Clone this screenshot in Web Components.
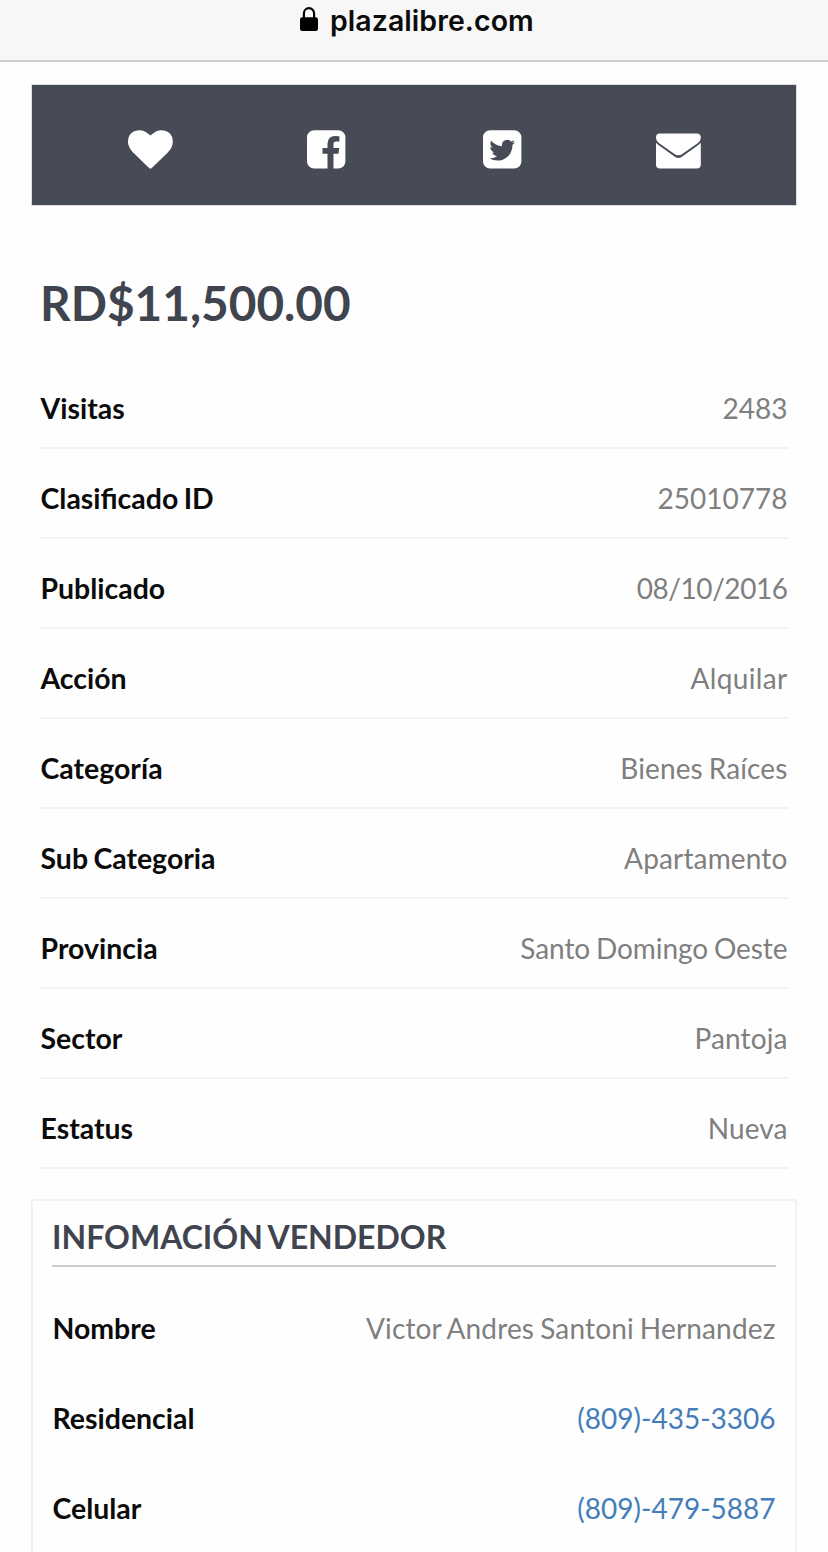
<!DOCTYPE html>
<html lang="es">
<head>
<meta charset="utf-8">
<title>plazalibre.com</title>
<style>
html,body{margin:0;background:#fefefe}
body{height:1552px;overflow:hidden;font-family:Lato,sans-serif}
</style>
</head>
<body>
<listing-page></listing-page>
<script>
const define = (name, html) => {
  const t = document.createElement('template');
  t.innerHTML = html;
  customElements.define(name, class extends HTMLElement {
    constructor() {
      super();
      this.attachShadow({mode: 'open'}).append(t.content.cloneNode(true));
    }
  });
};

define('address-bar', `
<style>
:host{display:flex;box-sizing:border-box;height:62px;background:#f7f7f7;border-bottom:2px solid #cfcfcf;justify-content:center;align-items:flex-start;padding:2px 0 0 5px}
svg{width:18px;height:24px;margin:5px 12px 0 0}
span{font:600 28.500px/37px Inter,sans-serif;letter-spacing:.05px;color:#0b0b0b;width:203px;white-space:nowrap}
</style>
<svg viewBox="0 0 18 24"><rect y="10.300" width="18" height="13.700" rx="2.200" fill="#000"/><path d="M3.900 11.500V6.400a5.100 5.300 0 0 1 10.200 0v5.100" fill="none" stroke="#000" stroke-width="2.200"/></svg>
<span><slot></slot></span>`);

define('share-bar', `
<style>
:host{display:grid;box-sizing:border-box;grid-template-columns:repeat(4,1fr);height:120px;margin:23px 32px 0;padding:4px 30px 0;background:#474b56;outline:1px solid #dcdde3;align-items:center;justify-items:center}
svg{display:block;height:44.800px;fill:#fff;margin-top:4px;overflow:visible}
.wide{width:44.800px}.sq{width:38.400px}
</style>
<svg class="wide" viewBox="0 0 1792 1792"><path d="M896 1664q-26 0-44-18l-624-602q-10-8-27.500-26T145 952.500 77 855 23.500 734 0 596q0-220 127-344t351-124q62 0 126.500 21.500t120 58T820 276t76 68q36-36 76-68t95.500-68.500 120-58T1314 128q224 0 351 124t127 344q0 221-229 450l-623 600q-18 18-44 18z"/></svg>
<svg class="sq" viewBox="0 0 1536 1792"><path d="M1248 128q119 0 203.500 84.500t84.500 203.500v960q0 119-84.500 203.500t-203.500 84.500h-188v-595h199l30-232h-229v-148q0-56 23.500-84t91.500-28l122-1v-207q-63-9-178-9-136 0-217.500 80t-81.500 226v171h-200v232h200v595h-532q-119 0-203.500-84.500t-84.500-203.500v-960q0-119 84.500-203.500t203.500-84.500h960z"/></svg>
<svg class="sq" viewBox="0 0 1536 1792"><path d="M1280 610q-56 25-121 34 68-40 93-117-65 38-134 51-61-66-153-66-87 0-148.500 61.500t-61.500 148.500q0 29 5 48-129-7-242-65t-192-155q-29 50-29 106 0 114 91 175-47-1-100-26v2q0 75 50 133.500t123 72.500q-29 8-51 8-13 0-39-4 21 63 74.500 104t121.500 42q-116 90-261 90-26 0-50-3 148 94 322 94 112 0 210-35.500t168-95 120.500-137 75-162 24.500-168.500q0-18-1-27 63-45 105-109zm256-194v960q0 119-84.500 203.500t-203.500 84.500h-960q-119 0-203.500-84.500t-84.500-203.500v-960q0-119 84.500-203.500t203.500-84.500h960q119 0 203.500 84.500t84.500 203.500z"/></svg>
<svg class="wide" viewBox="0 0 44.800 44.800"><path d="M4 6.600H40.800Q44.800 6.600 44.800 10.400C44.800 13.200 43 15.300 40.600 17L27 26.400Q22.400 30.200 17.800 26.400L4.200 17C1.800 15.300 0 13.200 0 10.400Q0 6.600 4 6.600Z"/><path d="M0 15.800Q1.200 17.200 2.800 18.300L17.800 29Q22.400 32.800 27 29L42 18.300Q43.600 17.200 44.800 15.800V37.600Q44.800 41.600 40.800 41.600H4Q0 41.600 0 37.600Z"/></svg>`);

define('price-tag', `
<style>
:host{display:block;margin:66px 40px 0;height:93px;font-weight:700;font-size:47.700px;line-height:64px;color:#40444f;white-space:nowrap}
</style><slot></slot>`);

define('detail-row', `
<style>
:host{display:flex;box-sizing:border-box;height:90px;justify-content:space-between;align-items:flex-start;padding-top:var(--top,30px);font-size:28px;line-height:38px;white-space:nowrap;color:#7f7f7f;border-bottom:2px solid var(--rule,#f2f2f2)}
b{font-weight:700;font-size:28.450px;color:#0b0b0b;word-spacing:-1.5px;margin-left:.5px}
span{letter-spacing:var(--ls,0);word-spacing:-1.3px;margin-right:.5px}
</style><b><slot name="label"></slot></b><span><slot></slot></span>`);

define('detail-list', `
<style>:host{display:block;margin:-5px 40px 0}:host([plain]){margin:0;--rule:transparent;--top:32px}</style><slot></slot>`);

define('seller-card', `
<style>
:host{display:block;box-sizing:border-box;margin:30px 31px 0;height:400px;border:2px solid #f2f2f2;padding:0 19px}
h2{margin:0 0 10px;font-size:32px;line-height:44px;padding-top:14px;height:50px;border-bottom:2px solid #ccc;color:#40444f;font-weight:700;word-spacing:-2px;white-space:nowrap}
</style>
<h2><slot name="title"></slot></h2><slot></slot>`);

define('phone-link', `
<style>:host{display:inline}a{color:#447db9;text-decoration:none}</style><a href="#"><slot></slot></a>`);

const row = (l, v, ls = 0) => `<detail-row style="--ls:${ls}px"><span slot="label">${l}</span>${v}</detail-row>`;
define('listing-page', `
<style>:host{display:block;width:828px;height:1552px;overflow:hidden}</style>
<address-bar>plazalibre.com</address-bar>
<share-bar></share-bar>
<price-tag>RD$11,500.00</price-tag>
<detail-list>
${[['Visitas','2483'],['Clasificado ID','25010778'],['Publicado','08/10/2016',-.45],['Acción','Alquilar',.35],['Categoría','Bienes Raíces',.12],['Sub Categoria','Apartamento',.15],['Provincia','Santo Domingo Oeste',-.06],['Sector','Pantoja',.1],['Estatus','Nueva',.1]].map(r => row(...r)).join('')}
</detail-list>
<seller-card><span slot="title">INFOMACIÓN VENDEDOR</span>
<detail-list plain>
${row('Nombre','Victor Andres Santoni Hernandez',.16)}
${row('Residencial','<phone-link>(809)-435-3306</phone-link>')}
${row('Celular','<phone-link>(809)-479-5887</phone-link>')}
</detail-list></seller-card>`);
</script>
</body>
</html>
